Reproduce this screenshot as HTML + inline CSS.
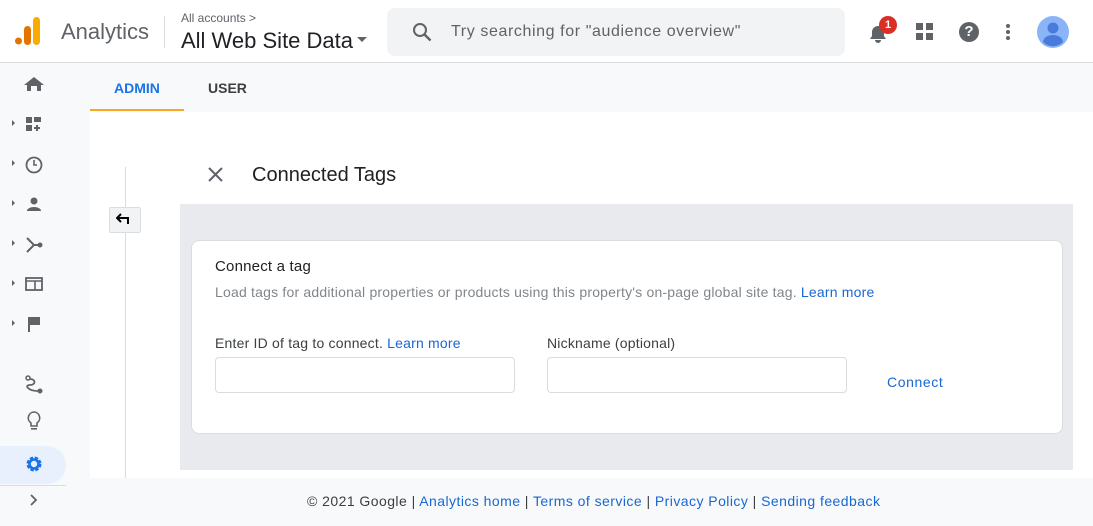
<!DOCTYPE html>
<html><head><style>
*{margin:0;padding:0;box-sizing:border-box}
body{width:1093px;height:526px;overflow:hidden;background:#f8f9fa;font-family:"Liberation Sans",sans-serif;position:relative;color:#202124}
.a{position:absolute;white-space:nowrap}
</style></head><body>
<div class="a" style="left:0;top:0;width:1093px;height:63px;background:#fff;border-bottom:1px solid #dadce0"></div>
<svg class="a" style="left:14px;top:16px" width="28" height="30"><rect x="19" y="1" width="7" height="28" rx="3.5" fill="#f9ab00"/><rect x="10" y="10" width="7" height="19" rx="3.5" fill="#e37400"/><circle cx="4.5" cy="25" r="3.5" fill="#e37400"/></svg>
<div class="a" style="left:61px;top:19px;font-size:22px;color:#5f6368">Analytics</div>
<div class="a" style="left:164px;top:16px;width:1px;height:32px;background:#dadce0"></div>
<div class="a" style="left:181px;top:11px;font-size:12px;color:#5f6368">All accounts &gt;</div>
<div class="a" style="left:181px;top:28px;font-size:22px;color:#202124">All Web Site Data</div>
<svg class="a" style="left:357px;top:37px" width="10" height="6"><path d="M0 0h10L5 5z" fill="#5f6368"/></svg>
<div class="a" style="left:387px;top:8px;width:458px;height:48px;background:#f1f3f4;border-radius:8px"></div>
<svg class="a" style="left:412px;top:22px" width="20" height="20"><circle cx="8" cy="8" r="6" stroke="#5f6368" stroke-width="2" fill="none"/><path d="M12.5 12.5l6 6" stroke="#5f6368" stroke-width="2.4"/></svg>
<div class="a" style="left:451px;top:23px;font-size:16px;color:#5f6368;letter-spacing:0.6px">Try searching for "audience overview"</div>
<svg class="a" style="left:867px;top:22px" width="22" height="22"><path d="M3 17h16l-2-3V10a6 6 0 0 0-12 0v4z M8 18a3 3 0 0 0 6 0z" fill="#5f6368"/></svg>
<div class="a" style="left:879px;top:16px;width:18px;height:18px;border-radius:9px;background:#d93025;color:#fff;font-size:11px;font-weight:bold;text-align:center;line-height:18px">1</div>
<svg class="a" style="left:916px;top:23px" width="18" height="18"><rect x="0" y="0" width="7" height="7" fill="#5f6368"/><rect x="10" y="0" width="7" height="7" fill="#5f6368"/><rect x="0" y="10" width="7" height="7" fill="#5f6368"/><rect x="10" y="10" width="7" height="7" fill="#5f6368"/></svg>
<div class="a" style="left:959px;top:22px;width:20px;height:20px;border-radius:10px;background:#5f6368;color:#fff;font-weight:bold;font-size:15px;text-align:center;line-height:20px">?</div>
<svg class="a" style="left:1005px;top:23px" width="6" height="18"><circle cx="3" cy="3" r="2" fill="#5f6368"/><circle cx="3" cy="9" r="2" fill="#5f6368"/><circle cx="3" cy="15" r="2" fill="#5f6368"/></svg>
<svg class="a" style="left:1037px;top:16px" width="32" height="32"><circle cx="16" cy="16" r="16" fill="#8ab4f8"/><circle cx="16" cy="12" r="5.5" fill="#4a7bdc"/><path d="M6 26a10 7 0 0 1 20 0a14 14 0 0 1-20 0z" fill="#4a7bdc"/></svg>

<div class="a" style="left:114px;top:80px;font-size:14px;color:#1a73e8;font-weight:bold">ADMIN</div>
<div class="a" style="left:90px;top:109px;width:94px;height:2px;background:#f9a825"></div>
<div class="a" style="left:208px;top:80px;font-size:14px;color:#3c4043;font-weight:bold">USER</div>

<div class="a" style="left:90px;top:112px;width:1003px;height:366px;background:#fff"></div>
<div class="a" style="left:125px;top:167px;width:1px;height:311px;background:#dadce0"></div>
<div class="a" style="left:109px;top:207px;width:32px;height:26px;background:#f1f3f4;border:1px solid #dadce0;border-radius:2px"></div>
<svg class="a" style="left:116px;top:213px" width="16" height="12"><path d="M5 1L1 5l4 4" fill="none" stroke="#000" stroke-width="2"/><path d="M1 5h11v6" fill="none" stroke="#000" stroke-width="2"/></svg>
<svg class="a" style="left:208px;top:167px" width="15" height="15"><path d="M1 1l13 13M14 1L1 14" stroke="#5f6368" stroke-width="2"/></svg>
<div class="a" style="left:252px;top:164px;font-size:20px">Connected Tags</div>
<div class="a" style="left:180px;top:204px;width:893px;height:266px;background:#e8eaed"></div>
<div class="a" style="left:191px;top:240px;width:872px;height:194px;background:#fff;border:1px solid #dadce0;border-radius:8px"></div>
<div class="a" style="left:215px;top:258px;font-size:15px;letter-spacing:0.2px">Connect a tag</div>
<div class="a" style="left:215px;top:284px;font-size:14px;color:#80868b;letter-spacing:0.2px">Load tags for additional properties or products using this property's on-page global site tag. <span style="color:#1967d2">Learn more</span></div>
<div class="a" style="left:215px;top:335px;font-size:14px;color:#3c4043;letter-spacing:0.2px">Enter ID of tag to connect. <span style="color:#1967d2">Learn more</span></div>
<div class="a" style="left:547px;top:335px;font-size:14px;color:#3c4043;letter-spacing:0.2px">Nickname (optional)</div>
<div class="a" style="left:215px;top:357px;width:300px;height:36px;border:1px solid #dadce0;border-radius:4px"></div>
<div class="a" style="left:547px;top:357px;width:300px;height:36px;border:1px solid #dadce0;border-radius:4px"></div>
<div class="a" style="left:887px;top:374px;font-size:14px;color:#1967d2;letter-spacing:0.6px">Connect</div>

<div class="a" style="left:0;top:446px;width:66px;height:38px;background:#e8f0fe;border-radius:0 19px 19px 0"></div>
<div class="a" style="left:0;top:485px;width:66px;height:1px;background:#dadce0"></div>
<svg class="a" style="left:0;top:70px" width="60" height="450" fill="#5f6368">
<path d="M27 21v-6h-3l10-8 10 8h-3v6h-4v-5h-6v5z"/>
<path d="M12 50l3 3-3 3z M12 90l3 3-3 3z M12 130l3 3-3 3z M12 170l3 3-3 3z M12 210l3 3-3 3z M12 250l3 3-3 3z"/>
<rect x="26" y="47" width="6" height="6"/><rect x="34" y="47" width="7" height="5"/><rect x="26" y="55" width="6" height="6"/><path d="M36 55h2v2h2v2h-2v2h-2v-2h-2v-2h2z"/>
<circle cx="34" cy="95" r="7.5" fill="none" stroke="#5f6368" stroke-width="1.8"/><path d="M34 90v5h3" fill="none" stroke="#5f6368" stroke-width="1.6"/>
<circle cx="34" cy="131" r="3.5"/><path d="M27 141a7 4 0 0 1 14 0z"/>
<path d="M27 168l7 7-7 7M34 175h6" fill="none" stroke="#5f6368" stroke-width="2"/><circle cx="40" cy="175" r="2.5"/>
<rect x="26" y="208" width="16" height="12" fill="none" stroke="#5f6368" stroke-width="1.8"/><path d="M26 211h16M35 211v9" stroke="#5f6368" stroke-width="1.6"/>
<path d="M28 247h12v8H30v7h-2z"/>
<circle cx="28" cy="308" r="2" fill="none" stroke="#5f6368" stroke-width="1.5"/><path d="M30 309c6 0 6 6 0 6s-2 6 8 6" fill="none" stroke="#5f6368" stroke-width="1.8"/><circle cx="40" cy="321" r="2.5"/>
<path d="M34 342a6 6 0 0 0-3 11v3h6v-3a6 6 0 0 0-3-11z" fill="none" stroke="#5f6368" stroke-width="1.6"/><rect x="31" y="358" width="6" height="1.6"/>
<path d="M31 425l5 5-5 5" fill="none" stroke="#5f6368" stroke-width="1.8"/>
</svg>
<svg class="a" style="left:25px;top:455px" width="18" height="18"><circle cx="9" cy="9" r="5.5" fill="none" stroke="#1a73e8" stroke-width="4" stroke-dasharray="3 1.4"/><circle cx="9" cy="9" r="4.5" fill="none" stroke="#1a73e8" stroke-width="2.6"/></svg>

<div class="a" style="left:307px;top:493px;font-size:14px;color:#3c4043;letter-spacing:0.45px">© 2021 Google | <span style="color:#1967d2">Analytics home</span> | <span style="color:#1967d2">Terms of service</span> | <span style="color:#1967d2">Privacy Policy</span> | <span style="color:#1967d2">Sending feedback</span></div>
</body></html>
